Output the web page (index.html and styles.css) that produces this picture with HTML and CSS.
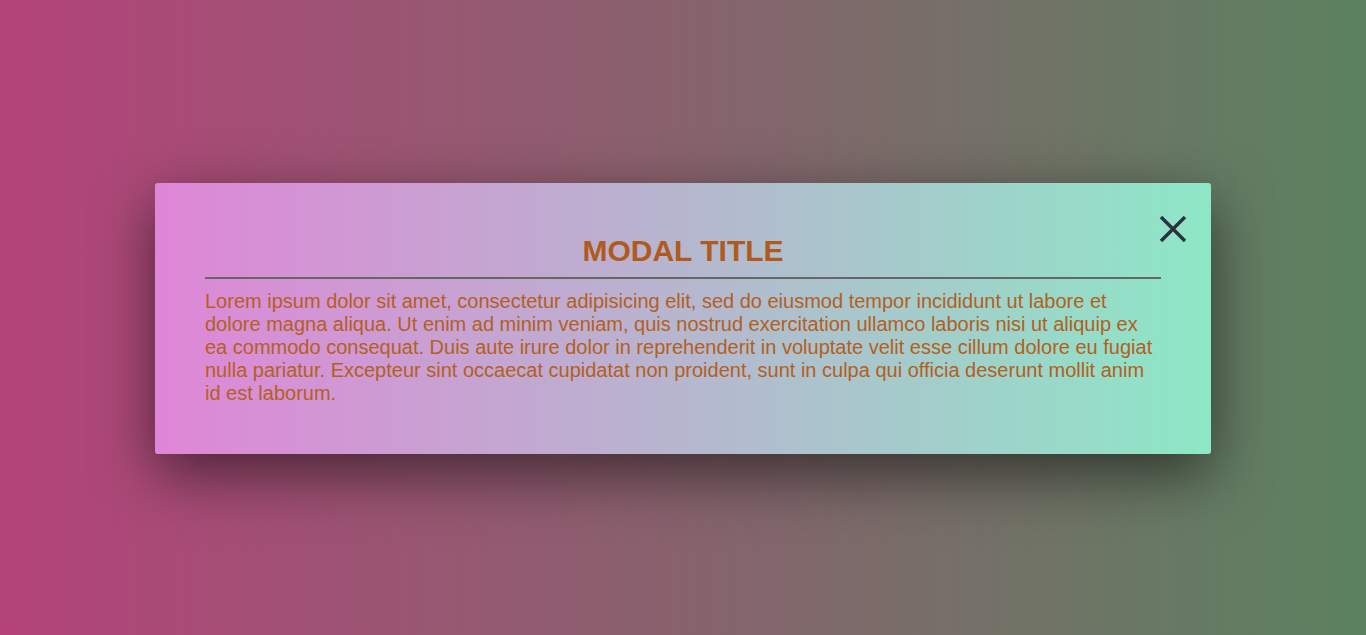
FILE: index.html
```html
<!DOCTYPE html>
<html lang="en">
<head>
<meta charset="utf-8">
<title>Modal</title>
<link rel="stylesheet" href="styles.css">
</head>
<body>
<div class="modal">
  <button class="close" aria-label="Close">
    <svg width="28" height="28" viewBox="0 0 28 28"><path d="M2 2L26 26M26 2L2 26" stroke="#2c3040" stroke-width="3.4" fill="none"/></svg>
  </button>
  <h2 class="title">MODAL TITLE</h2>
  <p class="body">Lorem ipsum dolor sit amet, consectetur adipisicing elit, sed do eiusmod tempor incididunt ut labore et dolore magna aliqua. Ut enim ad minim veniam, quis nostrud exercitation ullamco laboris nisi ut aliquip ex ea commodo consequat. Duis aute irure dolor in reprehenderit in voluptate velit esse cillum dolore eu fugiat nulla pariatur. Excepteur sint occaecat cupidatat non proident, sunt in culpa qui officia deserunt mollit anim id est laborum.</p>
</div>
</body>
</html>
```
FILE: styles.css
```css
html, body {
  margin: 0;
  height: 100%;
}
body {
  display: flex;
  align-items: center;
  justify-content: center;
  background: linear-gradient(to right, #b4437a, #5b8260);
  font-family: "Liberation Sans", Arial, sans-serif;
}
.modal {
  position: relative;
  box-sizing: border-box;
  width: 1056px;
  height: 271px;
  margin-top: 2px;
  padding: 51px 50px 48px;
  border-radius: 3px;
  background: linear-gradient(to right, #df86d7, #8de7c6);
  box-shadow: 0 20px 60px rgba(0, 0, 0, 0.55);
}
.title {
  margin: 0;
  padding-bottom: 9px;
  border-bottom: 2px solid #666;
  text-align: center;
  font-size: 30px;
  font-weight: bold;
  color: #b05a1d;
}
.body {
  margin: 11px 0 0;
  font-size: 20px;
  line-height: 23px;
  color: #b35f1f;
}
.close {
  position: absolute;
  top: 32px;
  right: 24px;
  padding: 0;
  border: 0;
  background: none;
  width: 28px;
  height: 28px;
  cursor: pointer;
}
.close svg { display: block; }
```
